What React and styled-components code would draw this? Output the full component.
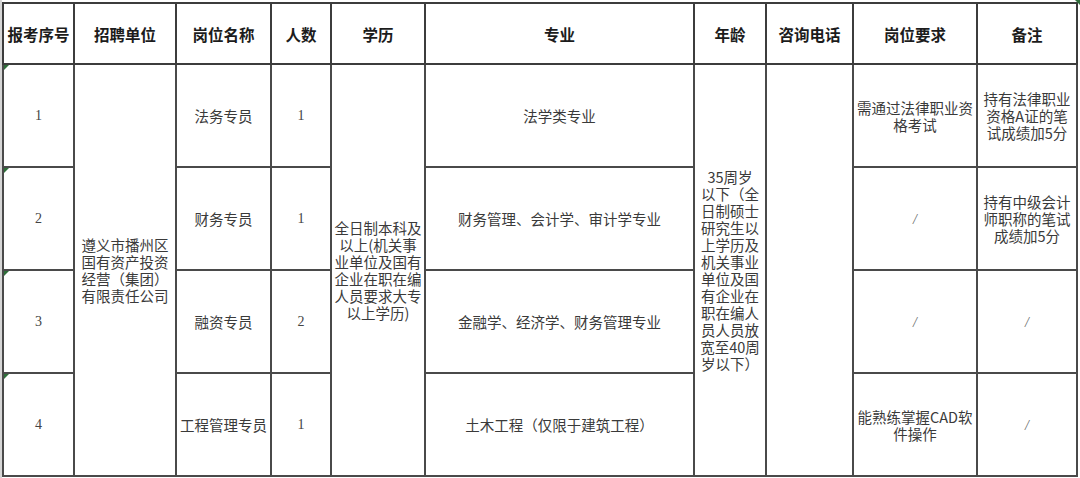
import React from "react";
import styled, { createGlobalStyle } from "styled-components";

const GlobalStyle = createGlobalStyle`
  html, body {
    margin: 0;
    padding: 0;
    background: #ffffff;
  }
  body {
    font-family: "Noto Sans CJK SC", "Noto Sans", sans-serif;
  }
`;

const columns = [71, 102, 95, 60, 94, 269, 72, 87, 124, 100];

const headers = [
  "报考序号",
  "招聘单位",
  "岗位名称",
  "人数",
  "学历",
  "专业",
  "年龄",
  "咨询电话",
  "岗位要求",
  "备注",
];

const unitLines = ["遵义市播州区", "国有资产投资", "经营（集团）", "有限责任公司"];

const degreeLines = [
  "全日制本科及",
  "以上(机关事",
  "业单位及国有",
  "企业在职在编",
  "人员要求大专",
  "以上学历)",
];

const ageLines = [
  "35周岁",
  "以下（全",
  "日制硕士",
  "研究生以",
  "上学历及",
  "机关事业",
  "单位及国",
  "有企业在",
  "职在编人",
  "员人员放",
  "宽至40周",
  "岁以下）",
];

const rows = [
  {
    no: "1",
    post: "法务专员",
    count: "1",
    major: "法学类专业",
    req: ["需通过法律职业资", "格考试"],
    note: ["持有法律职业", "资格A证的笔", "试成绩加5分"],
  },
  {
    no: "2",
    post: "财务专员",
    count: "1",
    major: "财务管理、会计学、审计学专业",
    req: ["/"],
    note: ["持有中级会计", "师职称的笔试", "成绩加5分"],
  },
  {
    no: "3",
    post: "融资专员",
    count: "2",
    major: "金融学、经济学、财务管理专业",
    req: ["/"],
    note: ["/"],
  },
  {
    no: "4",
    post: "工程管理专员",
    count: "1",
    major: "土木工程（仅限于建筑工程）",
    req: ["能熟练掌握CAD软", "件操作"],
    note: ["/"],
  },
];

function Lines({ items }) {
  return items.map((line, i) => (
    <React.Fragment key={i}>
      {i > 0 && <br />}
      {line}
    </React.Fragment>
  ));
}

export default function App() {
  return (
    <>
      <GlobalStyle />
      <Page>
        <CornerMark />
        <Table>
          <colgroup>
            {columns.map((w, i) => (
              <col key={i} style={{ width: w }} />
            ))}
          </colgroup>
          <thead>
            <Row $h={61}>
              {headers.map((h) => (
                <HeadCell key={h}>{h}</HeadCell>
              ))}
            </Row>
          </thead>
          <tbody>
            {rows.map((r, i) => (
              <Row key={r.no} $h={103}>
                <NumCell $marked>
                  <Marker />
                  {r.no}
                </NumCell>
                {i === 0 && (
                  <Cell rowSpan={4} $lh={17}>
                    <Lines items={unitLines} />
                  </Cell>
                )}
                <Cell $nowrap>{r.post}</Cell>
                <NumCell>{r.count}</NumCell>
                {i === 0 && (
                  <Cell rowSpan={4} $lh={17}>
                    <Lines items={degreeLines} />
                  </Cell>
                )}
                <Cell>{r.major}</Cell>
                {i === 0 && (
                  <Cell rowSpan={4} $lh={17}>
                    <Lines items={ageLines} />
                  </Cell>
                )}
                {i === 0 && <Cell rowSpan={4} />}
                <Cell $lh={17}>
                  {r.req[0] === "/" ? <Slash>/</Slash> : <Lines items={r.req} />}
                </Cell>
                <Cell $lh={17}>
                  {r.note[0] === "/" ? <Slash>/</Slash> : <Lines items={r.note} />}
                </Cell>
              </Row>
            ))}
          </tbody>
        </Table>
      </Page>
    </>
  );
}

const Page = styled.div`
  position: relative;
  width: 1080px;
  height: 478px;
  box-sizing: border-box;
  overflow: hidden;
  padding: 2px 0 0 0;
  border-left: 2px solid #d6d6d6;
  background: #ffffff;
`;

const CornerMark = styled.span`
  position: absolute;
  top: 0;
  right: 0;
  width: 0;
  height: 0;
  border-top: 5px solid #2f6e3a;
  border-left: 5px solid transparent;
`;

const Table = styled.table`
  width: 1076px;
  table-layout: fixed;
  border-collapse: collapse;
  border: 2px solid #3c3c3c;
`;

const Row = styled.tr`
  height: ${(p) => p.$h}px;
`;

const HeadCell = styled.th`
  border: 2px solid #3c3c3c;
  padding: 0;
  font-size: 15.5px;
  font-weight: 700;
  color: #1c1c1c;
  text-align: center;
  vertical-align: middle;
  white-space: nowrap;
`;

const Cell = styled.td`
  position: relative;
  border: 2px solid #4a4a4a;
  padding: 0 2px;
  font-size: 14.5px;
  line-height: ${(p) => (p.$lh ? `${p.$lh}px` : "normal")};
  color: #3a3a3a;
  text-align: center;
  vertical-align: middle;
  white-space: ${(p) => (p.$nowrap ? "nowrap" : "normal")};
  letter-spacing: 0;
`;

const NumCell = styled(Cell)`
  font-family: "Liberation Serif", "Noto Sans CJK SC", serif;
  font-size: 14px;
  color: #444444;
`;

const Marker = styled.span`
  position: absolute;
  top: 0;
  left: 0;
  width: 0;
  height: 0;
  border-top: 5px solid #2f6e3a;
  border-right: 5px solid transparent;
`;

const Slash = styled.span`
  font-family: "Liberation Serif", serif;
  font-style: italic;
  font-size: 14px;
  color: #666666;
`;
